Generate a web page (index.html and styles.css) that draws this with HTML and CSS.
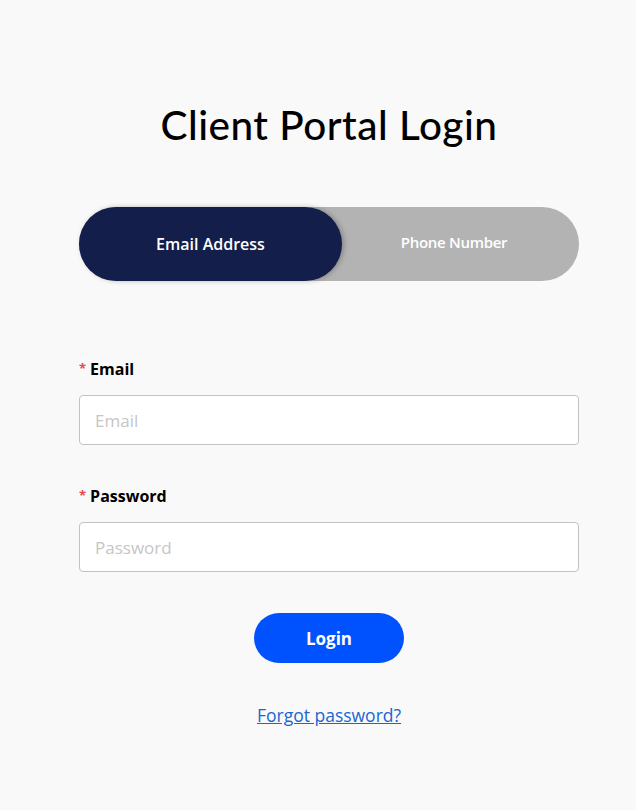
FILE: index.html
```html
<!DOCTYPE html>
<html lang="en">
<head>
<meta charset="utf-8">
<title>Client Portal Login</title>
<link rel="stylesheet" href="styles.css">
</head>
<body>
<main class="page">
  <h1 class="title">Client Portal Login</h1>
  <div class="toggle">
    <div class="tab tab-active">Email Address</div>
    <div class="tab tab-inactive">Phone Number</div>
  </div>
  <form class="form">
    <div class="field">
      <label class="label"><span class="req">*</span>Email</label>
      <input class="input" type="text" placeholder="Email">
    </div>
    <div class="field">
      <label class="label"><span class="req">*</span>Password</label>
      <input class="input" type="password" placeholder="Password">
    </div>
    <div class="actions">
      <button type="button" class="btn">Login</button>
      <a class="link" href="#">Forgot password?</a>
    </div>
  </form>
</main>
</body>
</html>
```
FILE: styles.css
```css
html, body {
  margin: 0;
  padding: 0;
  background: #f9f9f9;
}
body {
  font-family: "Open Sans", "Lato", sans-serif;
  color: #000;
  padding-left: 22px;
}
.page {
  width: 500px;
  margin: 0 auto;
  padding-top: 100px;
  display: flex;
  flex-direction: column;
}
.title {
  margin: 0;
  text-align: center;
  font-family: "Lato", sans-serif;
  font-size: 40.5px;
  font-weight: 500;
  line-height: 50px;
  letter-spacing: 0.5px;
}
.toggle {
  margin-top: 57px;
  height: 74px;
  border-radius: 37px;
  background: #b3b3b3;
  display: grid;
  grid-template-columns: 1fr 1fr;
}
.tab {
  display: flex;
  align-items: center;
  justify-content: center;
  color: #fff;
  border-radius: 37px;
}
.tab-active {
  width: calc(100% + 13px);
  position: relative;
  z-index: 1;
  background: #131f4a;
  font-size: 16px;
  font-weight: 600;
  box-shadow: 2px 0 5px rgba(0,0,0,0.25);
}
.tab-active {
  justify-content: center;
}
.tab-inactive {
  font-size: 15px;
  font-weight: 600;
  padding-bottom: 4px;
  letter-spacing: -0.3px;
}
.form {
  margin-top: 76px;
  display: flex;
  flex-direction: column;
}
.field {
  display: flex;
  flex-direction: column;
  margin-bottom: 39px;
}
.label {
  font-size: 16px;
  font-weight: 700;
  line-height: 24px;
  margin-bottom: 13px;
}
.req {
  color: #e5484d;
  font-size: 13px;
  margin-right: 4px;
  position: relative;
  top: -2px;
}
.input {
  box-sizing: border-box;
  height: 50px;
  border: 1px solid #c2c2c2;
  border-radius: 4px;
  background: #fff;
  padding: 0 15px;
  font-family: inherit;
  font-size: 17px;
  outline: none;
}
.input::placeholder {
  color: #c6c6c6;
}
.actions {
  display: flex;
  flex-direction: column;
  align-items: center;
  margin-top: 2px;
}
.btn {
  width: 150px;
  height: 50px;
  border: none;
  border-radius: 25px;
  background: #0052ff;
  color: #fff;
  font-family: inherit;
  font-size: 17px;
  font-weight: 700;
  cursor: pointer;
}
.link {
  margin-top: 40px;
  color: #1a66d2;
  font-size: 17.5px;
  text-decoration: underline;
}
```
